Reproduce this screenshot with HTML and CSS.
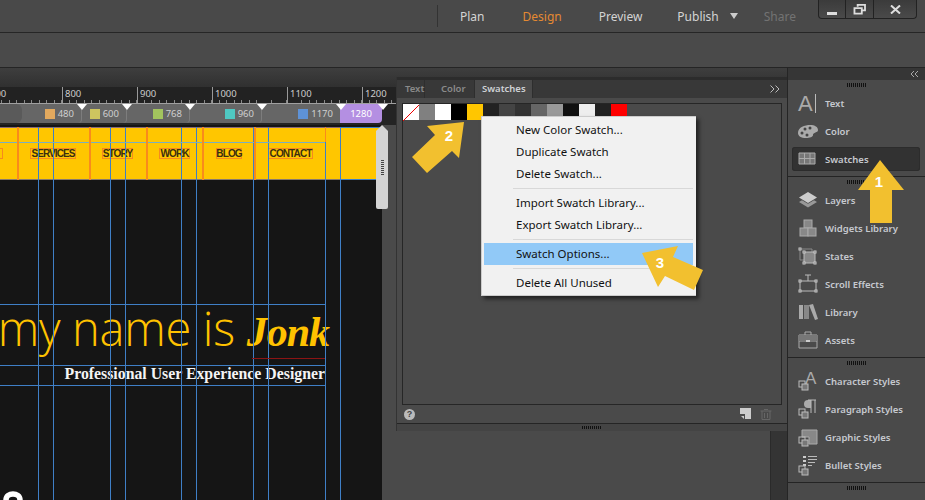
FILE: index.html
```html
<!DOCTYPE html>
<html lang="en">
<head>
<meta charset="utf-8">
<title>Swatches</title>
<link rel="stylesheet" href="styles.css">
</head>
<body>
<div class="app">
  <header class="topbar">
    <nav class="modes">
      <span class="mode">Plan</span>
      <span class="mode active">Design</span>
      <span class="mode preview">Preview</span>
      <span class="mode publish">Publish</span>
      <span class="caret"></span>
      <span class="mode share">Share</span>
    </nav>
    <div class="winctl">
      <span class="winbtn"><svg width="11" height="12" viewBox="0 0 11 12"><rect x="0" y="9" width="10" height="3" fill="#ddd"/></svg></span>
      <span class="winbtn restore"><svg width="13" height="11" viewBox="0 0 14 12"><path d="M5 3V1h8v6h-3M1.500 4.500h8v6h-8z" fill="none" stroke="#ddd" stroke-width="2"/></svg></span>
      <span class="winbtn close"><svg width="11" height="9" viewBox="0 0 12 10"><path d="M1 0.500l10 9M11 0.500l-10 9" stroke="#ddd" stroke-width="2.200"/></svg></span>
    </div>
  </header>
  <div class="toolbar"></div>
  <main class="workspace">
    <section class="editor">
      <div class="tabstrip"></div>
      <div class="ruler">
        <span class="rulecell">700</span><span class="rulecell">800</span><span class="rulecell">900</span><span class="rulecell">1000</span><span class="rulecell">1100</span><span class="rulecell">1200</span>
      </div>
      <div class="breakpoints">
        <span class="bp b0"></span>
        <span class="bp b1"><i class="chip c480"></i>480</span>
        <span class="bp b2"><i class="chip c600"></i>600</span>
        <span class="bp b3"><i class="chip c768"></i>768</span>
        <span class="bp b4"><i class="chip c960"></i>960</span>
        <span class="bp b5"><i class="chip c1170"></i>1170</span>
        <span class="bp b6">1280</span>
      </div>
      <div class="stage">
        <div class="canvas">
          <div class="sitehead">
            <span class="navitem n0">&nbsp;</span>
            <span class="navitem n1">SERVICES</span>
            <span class="navitem n2">STORY</span>
            <span class="navitem n3">WORK</span>
            <span class="navitem n4">BLOG</span>
            <span class="navitem n5">CONTACT</span>
          </div>
          <div class="hero">
            <h1 class="headline">my name is <em class="jonk">Jonk</em></h1>
            <p class="tagline">Professional User Experience Designer</p>
          </div>
          <div class="guides">
            <i class="gv g38"></i><i class="gv g53"></i><i class="gv g110"></i><i class="gv g125"></i><i class="gv g181"></i><i class="gv g196"></i><i class="gv g253"></i><i class="gv g268"></i><i class="gv g325"></i><i class="gv g340"></i>
            <i class="gh h142"></i><i class="gh h304"></i><i class="gh h365"></i><i class="gh h385"></i><i class="gh h127r"></i><i class="gh h180r"></i>
            <i class="or o17"></i><i class="or o89"></i><i class="or o146"></i><i class="or o202"></i><i class="or o254"></i><i class="or o325"></i>
            <i class="redline"></i>
          </div>
          <svg class="bottomlogo" width="20" height="9" viewBox="0 0 20 9"><path d="M3 9C3 1 17 1 17 9" fill="none" stroke="#fff" stroke-width="5.500"/></svg>
          <div class="handle"><i class="handlegrip"></i></div>
        </div>
        <div class="gutter"><div class="gutterblock"></div></div>
      </div>
    </section>
    <aside class="dock">
      <div class="dockhead"><svg width="9" height="6" viewBox="0 0 9 6"><path d="M4 0L1 3l3 3M8 0L5 3l3 3" fill="none" stroke="#aaa"/></svg></div>
      <div class="docksec">
        <i class="grip"></i>
        <div class="row"><svg class="ic" viewBox="0 0 20 20"><text x="0" y="18" class="icl">A</text><path d="M17.500 1v19" stroke="#bbb"/></svg><span>Text</span></div>
        <div class="row"><svg class="ic" viewBox="0 0 20 20"><path d="M0 12C0 6 7 4 12 4s8 2 8 5c0 3-5 2-5 5 0 2-3 3-7 3C3 17 0 15 0 12z" fill="#aaa"/><g fill="#444"><circle cx="4" cy="12" r="1.500"/><circle cx="7" cy="8" r="1.500"/><circle cx="12" cy="7" r="1.500"/><circle cx="9" cy="14" r="1.500"/></g></svg><span>Color</span></div>
        <div class="row selected"><svg class="ic" viewBox="0 0 20 20"><path d="M1 4h16v11H1zM1 9.500h16M6.500 4v11M12 4v11" fill="#777" stroke="#aaa"/></svg><span>Swatches</span></div>
      </div>
      <div class="docksec">
        <i class="grip"></i>
        <div class="row"><svg class="ic" viewBox="0 0 20 20"><path d="M1 12l3-1.800 6 3.500 6-3.500 3 1.800-9 5.500z" fill="#999"/><path d="M10 2l9 5.500-9 5.500-9-5.500z" fill="#ccc"/></svg><span>Layers</span></div>
        <div class="row"><svg class="ic" viewBox="0 0 20 20"><g fill="#888" stroke="#aaa"><rect x="6" y="2" width="8" height="8"/><rect x="2" y="10" width="8" height="8"/><rect x="10" y="10" width="8" height="8"/></g></svg><span>Widgets Library</span></div>
        <div class="row"><svg class="ic" viewBox="0 0 20 20"><path d="M2 3h12v11H2z" fill="none" stroke="#888"/><rect x="6" y="6" width="11" height="11" fill="#888" stroke="#bbb"/><g fill="#444" stroke="#ccc"><rect x="1" y="2" width="2" height="2"/><rect x="5" y="5" width="2" height="2"/><rect x="16" y="5" width="2" height="2"/><rect x="5" y="16" width="2" height="2"/><rect x="16" y="16" width="2" height="2"/></g></svg><span>States</span></div>
        <div class="row"><svg class="ic" viewBox="0 0 20 20"><path d="M7 1h6M10 1v6M2 7h16v10H2z" fill="none" stroke="#bbb"/><g fill="#444" stroke="#ccc"><rect x="1" y="6" width="2" height="2"/><rect x="17" y="6" width="2" height="2"/><rect x="1" y="16" width="2" height="2"/><rect x="17" y="16" width="2" height="2"/></g></svg><span>Scroll Effects</span></div>
        <div class="row"><svg class="ic" viewBox="0 0 20 20"><rect x="1" y="3" width="4" height="14" fill="#aaa"/><rect x="6" y="3" width="5" height="14" fill="#888"/><path d="M11 3l4-1 5 15-3 1z" fill="#aaa"/></svg><span>Library</span></div>
        <div class="row"><svg class="ic" viewBox="0 0 20 20"><path d="M7 5V2h6v3M1 5h18v13H1zM1 11h18" fill="none" stroke="#aaa"/><rect x="1" y="5" width="18" height="6" fill="#777"/><rect x="8" y="10" width="4" height="2" fill="#ccc"/></svg><span>Assets</span></div>
      </div>
      <div class="docksec">
        <i class="grip"></i>
        <div class="row"><svg class="ic" viewBox="0 0 20 20"><text x="7" y="13" class="ics">A</text><rect x="1" y="10" width="6" height="6" fill="none" stroke="#bbb"/><rect x="4" y="13" width="6" height="6" fill="#777" stroke="#bbb"/></svg><span>Character Styles</span></div>
        <div class="row"><svg class="ic" viewBox="0 0 20 20"><path d="M13 1h-3a4 4 0 0 0 0 8h3z" fill="#aaa"/><path d="M13 1v13M17 1v13M10 1h8" fill="none" stroke="#bbb"/><rect x="1" y="10" width="6" height="6" fill="none" stroke="#bbb"/><rect x="4" y="13" width="6" height="6" fill="#777" stroke="#bbb"/></svg><span>Paragraph Styles</span></div>
        <div class="row"><svg class="ic" viewBox="0 0 20 20"><path d="M4 3h15v14H11V10H4z" fill="#888" stroke="#aaa"/><rect x="1" y="10" width="6" height="6" fill="none" stroke="#bbb"/><rect x="4" y="13" width="6" height="6" fill="#777" stroke="#bbb"/></svg><span>Graphic Styles</span></div>
        <div class="row"><svg class="ic" viewBox="0 0 20 20"><g fill="#ccc"><rect x="5" y="1" width="3" height="2"/><rect x="5" y="5" width="3" height="2"/><rect x="5" y="9" width="3" height="2"/></g><path d="M10 1.500h9M10 4.500h9M10 7.500h7M10 10.500h4" stroke="#bbb"/><rect x="1" y="11" width="6" height="6" fill="none" stroke="#bbb"/><rect x="4" y="14" width="6" height="6" fill="#777" stroke="#bbb"/></svg><span>Bullet Styles</span></div>
      </div>
      <div class="docksec last"><i class="grip"></i></div>
    </aside>
  </main>

  <div class="swpanel">
    <div class="swtabs">
      <span class="swtab t1">Text</span>
      <span class="swtab t2">Color</span>
      <span class="swtab on">Swatches</span>
      <svg class="swmore" width="10" height="8" viewBox="0 0 10 8"><path d="M0.500 0.500L4 4 0.500 7.500M5.500 0.500L9 4 5.500 7.500" fill="none" stroke="#bbb"/></svg>
    </div>
    <div class="swbox">
      <div class="swatches">
        <i class="sw none"><svg width="16" height="16" viewBox="0 0 16 16"><path d="M0 16L16 0" stroke="#e00"/></svg></i>
        <i class="sw s1"></i><i class="sw s2"></i><i class="sw s3"></i><i class="sw s4"></i><i class="sw s5"></i><i class="sw s6"></i><i class="sw s7"></i><i class="sw s8"></i><i class="sw s9"></i><i class="sw s10"></i><i class="sw s11"></i><i class="sw s5"></i><i class="sw s13"></i>
      </div>
    </div>
    <div class="swfoot">
      <span class="help">?</span>
      <svg width="12" height="12" viewBox="0 0 12 12"><path d="M0 0h11v11H5V6H0z" fill="#ccc"/><path d="M1 8h3v3z" fill="#ccc"/></svg>
      <svg width="12" height="12" viewBox="0 0 12 12"><path d="M4 1.500h4M0.500 3h11M2 3v8.500h8V3M4.500 5v5M7.500 5v5" fill="none" stroke="#666"/></svg>
    </div>
    <div class="swgripbar"><i class="grip"></i></div>
  </div>

  <ul class="menu">
    <li class="mi">New Color Swatch...</li>
    <li class="mi">Duplicate Swatch</li>
    <li class="mi">Delete Swatch...</li>
    <li class="msep"></li>
    <li class="mi">Import Swatch Library...</li>
    <li class="mi">Export Swatch Library...</li>
    <li class="msep"></li>
    <li class="mi hot">Swatch Options...</li>
    <li class="msep"></li>
    <li class="mi">Delete All Unused</li>
  </ul>

  <svg class="callouts" width="925" height="500" viewBox="0 0 925 500">
    <polygon points="880,160 904,190 892,190 892,223 870,223 870,190 858,190" class="arrow"/>
    <text x="879" y="187" class="num">1</text>
    <polygon points="464,122 427,126 435,135 412,157 427,173 452,151 459,158" class="arrow"/>
    <text x="449" y="141" class="num">2</text>
    <polygon points="642,253 678,246 673,257 703,270 694,290 665,276 658,287" class="arrow"/>
    <text x="660" y="268" class="num">3</text>
  </svg>
</div>
</body>
</html>
```
FILE: styles.css
```css
* { box-sizing: border-box; }
html, body { margin: 0; padding: 0; }
body { width: 925px; height: 500px; overflow: hidden; background: #4a4a4a; font-family: "Noto Sans", "Liberation Sans", sans-serif; }
.app { position: relative; width: 925px; height: 500px; overflow: hidden; display: flex; flex-direction: column; }

.topbar { height: 33px; flex: none; display: flex; align-items: flex-start; justify-content: space-between; background: #494949; border-bottom: 1px solid #262626; }
.modes { display: flex; align-items: center; height: 32px; margin-left: 437px; padding-left: 23px; position: relative; font-size: 12px; }
.modes::before { content: ""; position: absolute; left: 0; top: 5px; height: 22px; width: 1px; background: #333; }
.mode { color: #d4d4d4; margin-right: 38px; }
.mode.active { color: #e58a32; margin-right: 37px; }
.mode.preview { margin-right: 35px; }
.mode.publish { margin-right: 11px; }
.caret { width: 0; height: 0; border: 4px solid transparent; border-top: 6px solid #ccc; border-bottom: 0; margin-right: 26px; }
.mode.share { color: #737373; margin-right: 0; }
.winctl { display: flex; height: 19px; margin-right: 8px; border: 1px solid #222; border-top: 0; border-radius: 0 0 4px 4px; background: linear-gradient(#3b3b3b, #4a4a4a); }
.winbtn { width: 27px; height: 18px; display: flex; align-items: center; justify-content: center; border-right: 1px solid #222; }
.winbtn.restore { width: 28px; }
.winbtn.close { width: 42px; border-right: 0; }

.toolbar { height: 35px; flex: none; background: #4a4a4a; border-bottom: 1px solid #252525; }

.workspace { flex: 1; display: flex; min-height: 0; }
.editor { width: 787px; flex: none; display: flex; flex-direction: column; }
.tabstrip { height: 19px; flex: none; background: linear-gradient(#3e3e3e, #303030); }
.ruler { height: 17px; flex: none; display: flex; margin-left: -13px; background: #222; border-bottom: 1px solid #a0a0a0; position: relative; }
.ruler::after { content: ""; position: absolute; left: 0; right: 0; bottom: 0; height: 3px; background: repeating-linear-gradient(90deg, transparent 0 6.5px, #8a8a8a 6.5px 7.5px); }
.rulecell { width: 75px; flex: none; border-left: 1px solid #999; padding-left: 2px; font-size: 9.500px; line-height: 14px; color: #ccc; font-family: "Noto Sans", sans-serif; }
.breakpoints { height: 21px; flex: none; display: flex; background: linear-gradient(#666, #666) no-repeat 0 0 / 340px 19px, #242424; font-size: 9.500px; color: #cfcfcf; }
.bp { height: 19px; display: flex; align-items: center; justify-content: flex-end; flex: none; background: #666; border-radius: 0 0 4px 0; border-right: 1px solid #7d7d7d; position: relative; padding-right: 7px; }
.bp::after { content: ""; position: absolute; right: -6px; top: 0; width: 0; height: 0; border: 5px solid transparent; border-top: 6px solid #fff; border-bottom: 0; z-index: 2; }
.b0 { width: 22px; background: #5a5a5a; border: 0; padding: 0; border-radius: 0 6px 6px 0; }
.b0::after, .b0::before { display: none; }
.b1 { width: 60px; }
.b2 { width: 45px; }
.b3 { width: 63px; }
.b4 { width: 72px; }
.b5 { width: 78px; border-right: 0; }
.b6 { width: 42px; background: #b48fe2; color: #fff; border: 0; justify-content: center; padding: 0; }
.chip { width: 10px; height: 10px; margin-right: 3px; }
.c480 { background: #e2a95e; }
.c600 { background: #cdc55f; }
.c768 { background: #a2c45e; }
.c960 { background: #4fc8c2; }
.c1170 { background: #5e92d6; margin-right: 3px; }

.stage { flex: 1; display: flex; min-height: 0; }
.canvas { width: 382px; flex: none; position: relative; background: #151515; }
.sitehead { height: 53px; margin-top: 2px; background: #ffc600; border-top: 1px solid #8a6a7a; border-bottom: 1px solid #8a7a6a; position: relative; display: flex; align-items: flex-start; padding-top: 20px; font-family: "Liberation Sans", sans-serif; font-size: 10px; font-weight: 700; letter-spacing: -0.900px; color: #3a2e10; }
.navitem { border: 1px solid #f58a1e; height: 11px; line-height: 9px; display: flex; justify-content: center; flex: none; white-space: nowrap; }
.n0 { width: 4px; margin-left: -1px; }
.n1 { width: 46px; margin-left: 27px; }
.n2 { width: 31px; margin-left: 26px; }
.n3 { width: 31px; margin-left: 26px; }
.n4 { width: 26px; margin-left: 26px; }
.n5 { width: 45px; margin-left: 26px; }
.hero { width: 329px; padding-top: 119px; display: flex; flex-direction: column; align-items: flex-end; }
.headline { margin: 0; font: 300 47px/58px "Open Sans", sans-serif; letter-spacing: -0.300px; color: #ffc200; white-space: nowrap; }
.jonk { font: italic 700 42px/58px "Liberation Serif", serif; letter-spacing: -1px; margin-left: 0; }
.tagline { margin: 4px 4px 0 0; font: 700 15.800px/18px "Liberation Serif", serif; color: #f4f4f4; white-space: nowrap; }
.guides { position: absolute; inset: 0; pointer-events: none; }
.gv { position: absolute; top: 2px; bottom: 0; width: 1px; background: #3f7fc6; }
.gh { position: absolute; left: 0; width: 325px; height: 1px; background: #3f7fc6; }
.g38 { left: 38px; } .g53 { left: 53px; } .g110 { left: 110px; } .g125 { left: 125px; } .g181 { left: 181px; } .g196 { left: 196px; } .g253 { left: 253px; } .g268 { left: 268px; } .g325 { left: 325px; } .g340 { left: 340px; }
.h142 { top: 17px; background: #7aaec0; }
.h304 { top: 179px; } .h365 { top: 240px; } .h385 { top: 260px; }
.h127r { top: 2px; left: 340px; width: 42px; }
.h180r { top: 54px; left: 340px; width: 42px; }
.or { position: absolute; top: 2px; height: 53px; width: 2px; background: #f98b1c; }
.o17 { left: 17px; } .o89 { left: 89px; } .o146 { left: 146px; } .o202 { left: 202px; } .o254 { left: 254px; } .o325 { left: 325px; width: 1px; height: 15px; }
.redline { position: absolute; left: 252px; width: 73px; top: 233px; height: 1px; background: #8c1414; }
.bottomlogo { position: absolute; left: 3px; bottom: 0; }
.handle { position: absolute; left: 376px; top: 0; width: 12px; height: 84px; background: #d4d4d4; border-radius: 1px 1px 2px 2px; clip-path: polygon(50% 0, 100% 6px, 100% 100%, 0 100%, 0 6px); display: flex; align-items: center; justify-content: center; }
.handlegrip { width: 3px; height: 15px; background: repeating-linear-gradient(#444 0 1px, transparent 1px 2px); }
.gutter { flex: 1; background: #4a4a4a; display: flex; justify-content: flex-end; }
.gutterblock { width: 17px; margin-top: 306px; background: #343434; border-left: 1px solid #2a2a2a; }

.dock { flex: 1; background: #4a4a4a; border-left: 1px solid #252525; display: flex; flex-direction: column; }
.dockhead { height: 12px; flex: none; background: #363636; display: flex; align-items: center; justify-content: flex-end; padding-right: 6px; }
.docksec { border-bottom: 1px solid #242424; padding: 3px 0 3px; display: flex; flex-direction: column; align-items: stretch; flex: none; }
.docksec.last { border: 0; flex: 1; }
.grip { display: block; width: 20px; height: 4px; margin: 0 auto 2px; flex: none; background: repeating-linear-gradient(90deg, #111 0 1px, transparent 1px 2px); }
.row { height: 24px; margin: 2px 5px 2px 4px; padding-left: 6px; display: flex; align-items: center; gap: 7px; font-size: 9.500px; font-weight: 600; color: #c6c9cf; white-space: nowrap; border-radius: 3px; }
.row.selected { background: #323232; box-shadow: inset 0 0 0 1px #2c2c2c; }
.ic { width: 20px; height: 20px; flex: none; overflow: visible; }
.icl { font: 400 22px "Liberation Sans", sans-serif; fill: #aaa; }
.ics { font: 400 17px "Liberation Sans", sans-serif; fill: #aaa; }

.swpanel { position: absolute; left: 397px; top: 77px; width: 390px; height: 354px; background: #4a4a4a; border-top: 3px solid #2c2c2c; display: flex; flex-direction: column; border-bottom: 1px solid #252525; box-shadow: -1px 0 0 #333; }
.swtabs { height: 18px; flex: none; display: flex; align-items: center; background: #383838; font-size: 9.500px; font-weight: 600; color: #8a8a8a; position: relative; }
.swtab { height: 18px; line-height: 18px; border-right: 1px solid #2e2e2e; flex: none; }
.t1 { width: 28px; padding-left: 8px; }
.t2 { width: 50px; padding-left: 16px; }
.swtab.on { background: #4a4a4a; color: #cfd2d6; width: 58px; padding-left: 7px; }
.swmore { position: absolute; right: 7px; top: 5px; }
.swbox { height: 302px; flex: none; margin: 5px 5px 0 5px; border: 1px solid #262626; }
.swatches { display: flex; }
.sw { width: 16px; height: 16px; display: block; flex: none; }
.none { background: #fff; }
.s1 { background: #808080; } .s2 { background: #fff; } .s3 { background: #000; } .s4 { background: #ffc600; } .s5 { background: #222; } .s6 { background: #444; } .s7 { background: #333; } .s8 { background: #666; } .s9 { background: #999; } .s10 { background: #111; } .s11 { background: #eee; } .s13 { background: #f00; }
.swfoot { height: 18px; flex: none; display: flex; align-items: center; padding: 0 15px 0 7px; gap: 8px; }
.help { width: 11px; height: 11px; border-radius: 50%; background: #bbb; color: #444; font: 700 9px/11px "Liberation Sans", sans-serif; text-align: center; margin-right: auto; }
.swgripbar { height: 8px; flex: none; border-top: 1px solid #252525; display: flex; align-items: center; background: #444; }
.swgripbar .grip { height: 3px; margin: 0 auto; }

.menu { position: absolute; left: 481px; top: 116px; width: 215px; height: 180px; margin: 0; padding: 2px 3px 3px; list-style: none; background: #f1f1f1; box-shadow: 3px 3px 4px rgba(0,0,0,.55); font-size: 11.500px; color: #111; border: 1px solid #ccc; border-right: 0; }
.mi { height: 22px; line-height: 21px; padding-left: 32px; margin-left: -1px; white-space: nowrap; }
.mi.hot { background: #91c9f7; }
.msep { height: 1px; margin: 3px 0 3px 28px; background: #d8d8d8; }
.callouts { position: absolute; left: 0; top: 0; pointer-events: none; }
.arrow { fill: #f2c02f; }
.num { font: 700 15px "Liberation Sans", sans-serif; fill: #fff; text-anchor: middle; }
```
